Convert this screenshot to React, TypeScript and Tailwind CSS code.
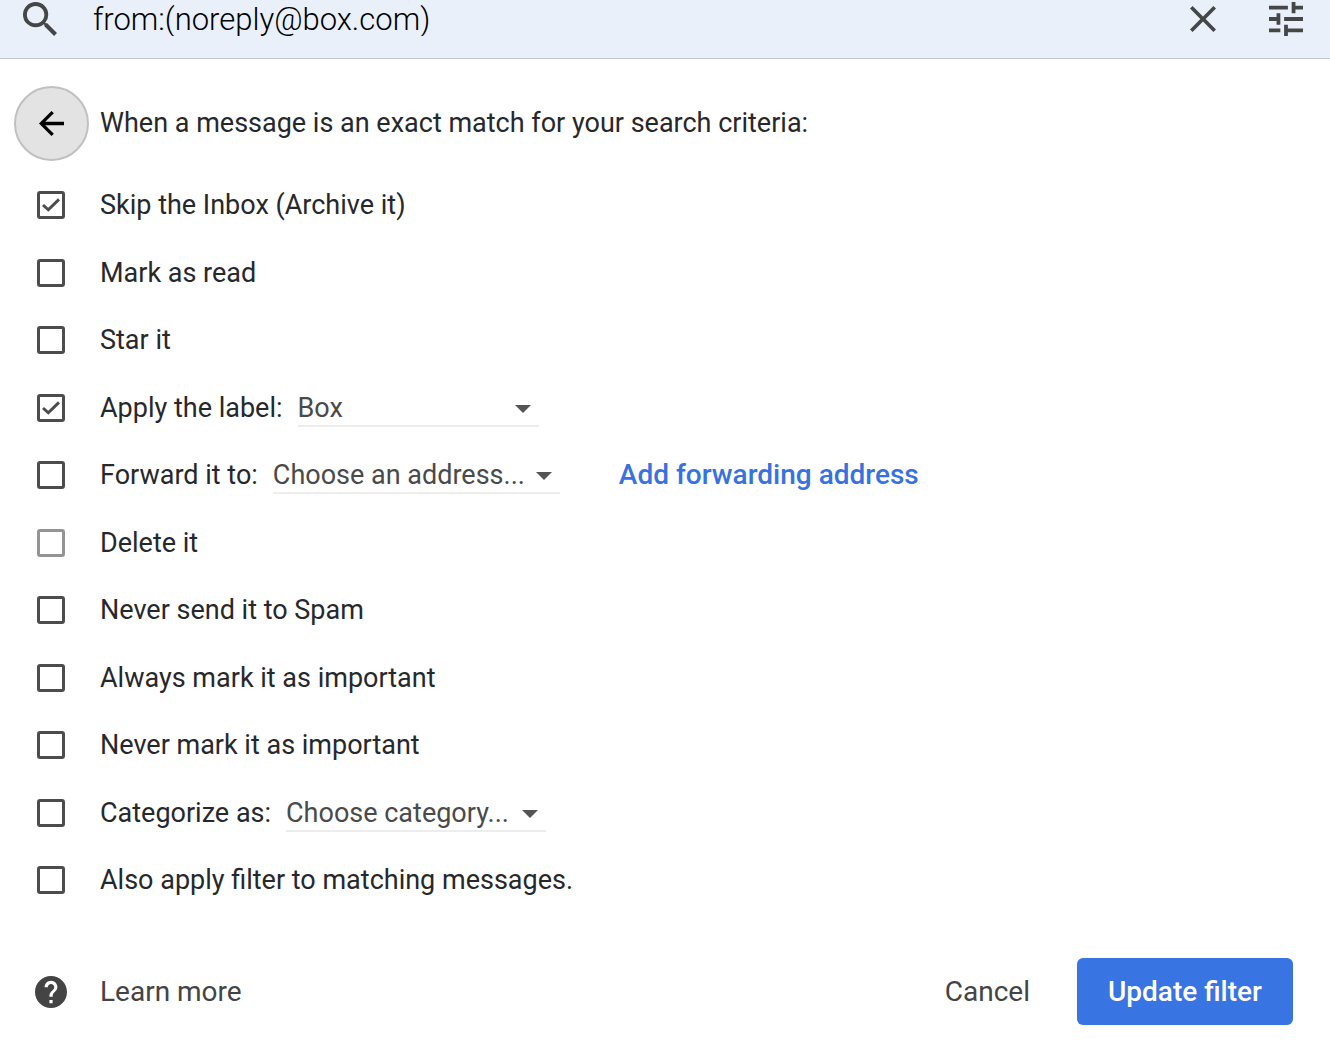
import { useState, type ReactNode } from "react";
import { clsx } from "clsx";

function SearchIcon() {
  return (
    <svg viewBox="3 3 17.5 17.5" className="size-[34px] fill-[#444746]" aria-hidden="true">
      <path d="M15.5 14h-.79l-.28-.27A6.47 6.47 0 0 0 16 9.5 6.5 6.5 0 1 0 9.5 16c1.61 0 3.09-.59 4.23-1.57l.27.28v.79l5 4.99L20.49 19l-4.99-5zm-6 0C7.01 14 5 11.99 5 9.5S7.01 5 9.5 5 14 7.01 14 9.5 11.99 14 9.5 14z" />
    </svg>
  );
}

function CloseIcon() {
  return (
    <svg viewBox="5 5 14 14" className="size-[26px] fill-[#444746]" aria-hidden="true">
      <path d="M19 6.41 17.59 5 12 10.59 6.41 5 5 6.41 10.59 12 5 17.59 6.41 19 12 13.41 17.59 19 19 17.59 13.41 12z" />
    </svg>
  );
}

function TuneIcon() {
  return (
    <svg viewBox="3 3 18 18" className="size-[34px] fill-[#444746]" aria-hidden="true">
      <path d="M3 17v2h6v-2H3zM3 5v2h10V5H3zm10 16v-2h8v-2h-8v-2h-2v6h2zM7 9v2H3v2h4v2h2V9H7zm14 4v-2H11v2h10zm-6-4h2V7h4V5h-4V3h-2v6z" />
    </svg>
  );
}

function BackIcon() {
  return (
    <svg viewBox="4 4 16 16" className="size-[25px] fill-black" aria-hidden="true">
      <path d="M20 10.9H8l5.5-5.4L12 4l-8 8 8 8 1.5-1.5L8 13.1h12v-2.2z" />
    </svg>
  );
}

function HelpIcon() {
  return (
    <svg viewBox="2 2 20 20" className="size-8 fill-[#444444]" aria-hidden="true">
      <path d="M12 2C6.48 2 2 6.48 2 12s4.48 10 10 10 10-4.48 10-10S17.52 2 12 2zm1 17h-2v-2h2v2zm2.07-7.75l-.9.92C13.45 12.9 13 13.5 13 15h-2v-.5c0-1.1.45-2.1 1.17-2.83l1.24-1.26c.37-.36.59-.86.59-1.41 0-1.1-.9-2-2-2s-2 .9-2 2H8c0-2.21 1.79-4 4-4s4 1.79 4 4c0 .88-.36 1.68-.93 2.25z" />
    </svg>
  );
}

function Checkbox({
  id,
  checked,
  faded,
  onChange,
}: {
  id: string;
  checked: boolean;
  faded?: boolean;
  onChange: (checked: boolean) => void;
}) {
  return (
    <span className="grid size-7 shrink-0 place-items-center">
      <input
        id={id}
        type="checkbox"
        checked={checked}
        onChange={(e) => onChange(e.target.checked)}
        className={clsx(
          "peer col-start-1 row-start-1 size-7 appearance-none rounded-[3px] border-3",
          faded ? "border-[#949494]" : "border-[#4c4c4c]",
        )}
      />
      <svg
        viewBox="0 0 18 14"
        className="pointer-events-none invisible col-start-1 row-start-1 h-[14px] w-[18px] fill-none stroke-[#4c4c4c] stroke-3 peer-checked:visible"
        aria-hidden="true"
      >
        <path d="M1 7 6.3 11.8 17 1.4" />
      </svg>
    </span>
  );
}

function Dropdown({ label, options, className }: { label: string; options: string[]; className: string }) {
  return (
    <span className={clsx("relative inline-flex", className)}>
      <select
        aria-label={label}
        className="h-[38px] w-full appearance-none border-b-2 border-[#ededed] bg-transparent pt-0.5 pr-8 text-[#4a4a4a]"
      >
        {options.map((opt) => (
          <option key={opt}>{opt}</option>
        ))}
      </select>
      <svg
        viewBox="0 0 16 8"
        className="pointer-events-none absolute top-4 right-2 h-2 w-4 fill-[#555555]"
        aria-hidden="true"
      >
        <path d="M0 0h16L8 8z" />
      </svg>
    </span>
  );
}

type FilterAction = {
  id: string;
  label: string;
  faded?: boolean;
  extra?: ReactNode;
};

const actions: FilterAction[] = [
  { id: "archive", label: "Skip the Inbox (Archive it)" },
  { id: "read", label: "Mark as read" },
  { id: "star", label: "Star it" },
  {
    id: "label",
    label: "Apply the label:",
    extra: <Dropdown label="Label" options={["Box"]} className="w-[241px]" />,
  },
  {
    id: "forward",
    label: "Forward it to:",
    extra: (
      <>
        <Dropdown label="Forwarding address" options={["Choose an address..."]} className="w-[287px]" />
        <a href="#forwarding" className="ml-[59px] text-[28px] font-medium text-[#3871e0]">
          Add forwarding address
        </a>
      </>
    ),
  },
  { id: "delete", label: "Delete it", faded: true },
  { id: "spam", label: "Never send it to Spam" },
  { id: "important", label: "Always mark it as important" },
  { id: "unimportant", label: "Never mark it as important" },
  {
    id: "category",
    label: "Categorize as:",
    extra: <Dropdown label="Category" options={["Choose category..."]} className="w-[260px]" />,
  },
  { id: "existing", label: "Also apply filter to matching messages." },
];

export default function App() {
  const [query, setQuery] = useState("from:(noreply@box.com)");
  const [selected, setSelected] = useState<Record<string, boolean>>({ archive: true, label: true });

  return (
    <div className="min-h-screen bg-white font-[Roboto,sans-serif] text-[27px] leading-8 text-[#27282b]">
      <header className="border-b border-[#c4c7cf] bg-[#eaf0fa] pr-[27px] pb-5 pl-[23px]">
        <div className="flex h-[38px] items-center">
          <button type="button" aria-label="Search">
            <SearchIcon />
          </button>
          <input
            type="text"
            aria-label="Search mail"
            value={query}
            onChange={(e) => setQuery(e.target.value)}
            className="ml-9 min-w-0 flex-1 bg-transparent pt-0.5 text-[31px] font-light text-black outline-none"
          />
          <button type="button" aria-label="Clear search">
            <CloseIcon />
          </button>
          <button type="button" aria-label="Show search options" className="ml-[53px]">
            <TuneIcon />
          </button>
        </div>
      </header>

      <main className="pt-[27px]">
        <div className="flex items-center gap-[11px] pl-[14px]">
          <button
            type="button"
            aria-label="Back"
            className="grid size-[75px] shrink-0 place-items-center rounded-full border-2 border-[#c0c0c0] bg-[#e3e3e3]"
          >
            <BackIcon />
          </button>
          <h1 className="pb-0.5">When a message is an exact match for your search criteria:</h1>
        </div>

        <ul className="mt-[10px] pl-[37px]">
          {actions.map((action) => (
            <li key={action.id} className="flex h-[67px] items-center odd:h-[68px]">
              <Checkbox
                id={action.id}
                checked={Boolean(selected[action.id])}
                faded={action.faded}
                onChange={(checked) => setSelected((prev) => ({ ...prev, [action.id]: checked }))}
              />
              <label htmlFor={action.id} className="mr-[15px] ml-[35px]">
                {action.label}
              </label>
              {action.extra}
            </li>
          ))}
        </ul>

        <footer className="mt-11 flex items-center pr-[37px] pl-[35px] text-[28px] text-[#444444]">
          <HelpIcon />
          <a href="#help" className="ml-[33px]">
            Learn more
          </a>
          <button type="button" className="mr-[47px] ml-auto">
            Cancel
          </button>
          <button type="button" className="h-[67px] w-[216px] rounded-md bg-[#3874e2] font-medium text-white">
            Update filter
          </button>
        </footer>
      </main>
    </div>
  );
}
